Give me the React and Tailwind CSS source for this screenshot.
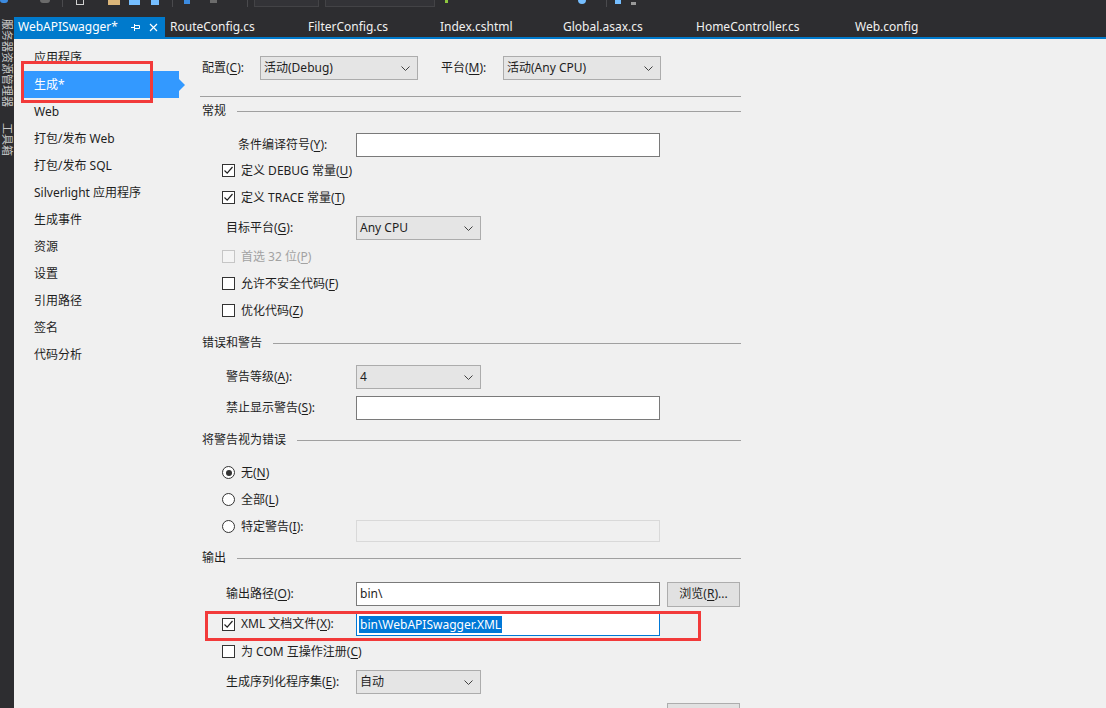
import React from "react";

const Chevron = () => (
  <svg width="9" height="5" viewBox="0 0 9 5" className="shrink-0">
    <path d="M0.5 0.5 L4.5 4.5 L8.5 0.5" stroke="#404040" strokeWidth="1" fill="none" />
  </svg>
);

const Select = ({ w, children }) => (
  <div className={`${w} h-[24px] shrink-0 border border-[#acacac] bg-[#e5e5e5] flex items-center justify-between pl-[3px] pr-[7px] text-[12px] text-[#1e1e1e]`}>
    <span>{children}</span>
    <Chevron />
  </div>
);

const Input = ({ children, disabled }) => (
  <div
    className={
      disabled
        ? "w-[304px] h-[22px] border border-[#d9d9d9] bg-[#f0f0f0]"
        : "w-[304px] h-[24px] border border-[#7a7a7a] bg-white flex items-center pl-[3px] text-[12px] text-[#1e1e1e]"
    }
  >
    {children}
  </div>
);

const Box = ({ checked, disabled }) => (
  <span
    className={
      disabled
        ? "w-[13px] h-[13px] border border-[#c6c6c6] bg-[#f4f4f4] shrink-0 flex items-center justify-center"
        : "w-[13px] h-[13px] border border-[#333333] bg-white shrink-0 flex items-center justify-center"
    }
  >
    {checked && (
      <svg width="11" height="11" viewBox="0 0 11 11">
        <path d="M1.5 5.5 L4.2 8.2 L9.5 2" stroke="#222" strokeWidth="1.2" fill="none" />
      </svg>
    )}
  </span>
);

const Radio = ({ on }) => (
  <span className="w-[13px] h-[13px] rounded-full border border-[#333333] bg-white shrink-0 flex items-center justify-center">
    {on && <span className="w-[6px] h-[6px] rounded-full bg-[#333333]" />}
  </span>
);

const U = ({ children }) => <span className="underline underline-offset-[2px]">{children}</span>;

const CheckRow = ({ checked, disabled, children, mt = "" }) => (
  <div className={`${mt} h-[27px] shrink-0 flex items-center pl-[22px]`}>
    <Box checked={checked} disabled={disabled} />
    <span className={disabled ? "ml-[6px] text-[#a2a2a2]" : "ml-[6px]"}>{children}</span>
  </div>
);

const Header = ({ title, mt }) => (
  <div className={`${mt} h-[20px] shrink-0 flex items-center pl-[2px]`}>
    <span>{title}</span>
    <div className="flex-1 h-px bg-[#a0a0a0] ml-[11px]" />
  </div>
);

const navItems = [
  "应用程序",
  "生成*",
  "Web",
  "打包/发布 Web",
  "打包/发布 SQL",
  "Silverlight 应用程序",
  "生成事件",
  "资源",
  "设置",
  "引用路径",
  "签名",
  "代码分析",
];

const tabs = [
  ["RouteConfig.cs", "w-[138px]"],
  ["FilterConfig.cs", "w-[132px]"],
  ["Index.cshtml", "w-[123px]"],
  ["Global.asax.cs", "w-[133px]"],
  ["HomeController.cs", "w-[159px]"],
  ["Web.config", "w-[120px]"],
];

export default function App() {
  return (
    <div className="relative w-[1106px] h-[708px] overflow-hidden bg-[#2d2d30] flex flex-col font-['Noto_Sans','Noto_Sans_CJK_SC',sans-serif] text-[12px] text-[#1e1e1e]">
      {/* toolbar fragments */}
      <div className="h-[17px] flex items-start shrink-0">
        <div className="w-[8px] h-[3px] bg-[#3c8be0] rounded-b-sm" />
        <div className="ml-[32px] w-[10px] h-[3px] bg-[#6b6b6b] rounded-b-full" />
        <div className="ml-[12px] w-px h-[7px] bg-[#4a4a4d]" />
        <div className="ml-[13px] w-[8px] h-[5px] border border-t-0 border-[#d0d0d0]" />
        <div className="ml-[24px] w-[12px] h-[5px] bg-[#dcb67a]" />
        <div className="ml-[9px] w-[11px] h-[5px] bg-[#75beff]" />
        <div className="ml-[11px] w-[8px] h-[5px] bg-[#75beff]" />
        <div className="ml-[13px] w-px h-[7px] bg-[#4a4a4d]" />
        <div className="ml-[11px] w-[6px] h-[4px] bg-[#3c8be0]" />
        <div className="ml-[20px] w-[7px] h-[3px] bg-[#6b6b6b]" />
        <div className="ml-[30px] w-px h-[7px] bg-[#4a4a4d]" />
        <div className="ml-[6px] w-[65px] h-[7px] border border-t-0 border-[#434346] bg-[#333337]" />
        <div className="ml-[6px] w-[110px] h-[7px] border border-t-0 border-[#434346] bg-[#333337]" />
        <div className="ml-[10px] w-[3px] h-[3px] bg-[#8dc63f]" />
        <div className="ml-[130px] w-[8px] h-[4px] bg-[#75beff] rounded-b-full" />
        <div className="ml-[20px] w-px h-[7px] bg-[#4a4a4d]" />
        <div className="ml-[8px] w-[6px] h-[4px] bg-[#75beff]" />
        <div className="ml-[10px] mt-[2px] w-[5px] h-[3px] bg-[#999999]" />
      </div>

      <div className="flex flex-1 min-h-0">
        {/* left tool strip */}
        <div className="w-[14px] shrink-0 bg-[#2d2d30] flex flex-col items-center pt-[2px] text-[11px] leading-[14px] text-[#c8c8c8]">
          <span className="[writing-mode:vertical-rl] [text-orientation:sideways]">服务器资源管理器</span>
          <span className="[writing-mode:vertical-rl] [text-orientation:sideways] mt-[16px]">工具箱</span>
        </div>

        <div className="flex-1 flex flex-col min-w-0">
          {/* tabs */}
          <div className="h-[20px] flex items-stretch shrink-0 text-[12px]">
            <div className="w-[151px] bg-[#007acc] flex items-center pl-[4px] text-white">
              <span>WebAPISwagger*</span>
              <svg width="9" height="8" viewBox="0 0 9 8" className="ml-auto">
                <path d="M0 4.5 H3.5 M3.5 1 V8 M3.5 2.5 H8.5 V5.5 H3.5" stroke="#ffffff" strokeWidth="1" fill="none" />
              </svg>
              <svg width="9" height="9" viewBox="0 0 9 9" className="ml-[9px] mr-[7px]">
                <path d="M1 1 L8 8 M8 1 L1 8" stroke="#ffffff" strokeWidth="1.2" fill="none" />
              </svg>
            </div>
            {tabs.map(([t, w]) => (
              <div key={t} className={`${w} shrink-0 flex items-center pl-[5px] text-[#f1f1f1]`}>
                {t}
              </div>
            ))}
          </div>
          <div className="h-[2px] bg-[#007acc] shrink-0" />

          {/* body */}
          <div className="flex-1 bg-[#f0f0f0] flex items-start min-h-0">
            {/* nav */}
            <div className="w-[186px] shrink-0 pt-[5px] flex flex-col">
              {navItems.map((n) => {
                const sel = n === "生成*";
                return (
                  <div key={n} className="h-[27px] shrink-0 flex items-center ml-[8px]">
                    <div className={sel ? "w-[157px] h-full bg-[#3399ff] text-white flex items-center pl-[12px]" : "w-[157px] h-full flex items-center pl-[12px]"}>
                      {n}
                    </div>
                    {sel && <div className="w-0 h-0 border-y-[6px] border-y-transparent border-l-[6px] border-l-[#3399ff]" />}
                  </div>
                );
              })}
            </div>

            {/* settings */}
            <div className="w-[541px] shrink-0 flex flex-col pt-[17px]">
              <div className="h-[24px] shrink-0 flex items-center">
                <span className="w-[60px] pl-[2px]">
                  配置(<U>C</U>):
                </span>
                <Select w="w-[158px]">活动(Debug)</Select>
                <span className="ml-[23px] w-[62px]">
                  平台(<U>M</U>):
                </span>
                <Select w="w-[158px]">活动(Any CPU)</Select>
              </div>
              <div className="mt-[16px] h-px shrink-0 bg-[#a0a0a0]" />

              <Header title="常规" mt="mt-[4px]" />
              <div className="mt-[12px] h-[24px] shrink-0 flex items-center">
                <span className="w-[156px] pl-[38px]">
                  条件编译符号(<U>Y</U>):
                </span>
                <Input />
              </div>
              <CheckRow checked>
                定义 DEBUG 常量(<U>U</U>)
              </CheckRow>
              <CheckRow checked>
                定义 TRACE 常量(<U>T</U>)
              </CheckRow>
              <div className="mt-[5px] h-[24px] shrink-0 flex items-center">
                <span className="w-[156px] pl-[26px]">
                  目标平台(<U>G</U>):
                </span>
                <Select w="w-[125px]">Any CPU</Select>
              </div>
              <CheckRow disabled mt="mt-[3px]">
                首选 32 位(<U>P</U>)
              </CheckRow>
              <CheckRow>
                允许不安全代码(<U>F</U>)
              </CheckRow>
              <CheckRow>
                优化代码(<U>Z</U>)
              </CheckRow>

              <Header title="错误和警告" mt="mt-[9px]" />
              <div className="mt-[12px] h-[24px] shrink-0 flex items-center">
                <span className="w-[156px] pl-[26px]">
                  警告等级(<U>A</U>):
                </span>
                <Select w="w-[125px]">4</Select>
              </div>
              <div className="mt-[7px] h-[24px] shrink-0 flex items-center">
                <span className="w-[156px] pl-[26px]">
                  禁止显示警告(<U>S</U>):
                </span>
                <Input />
              </div>

              <Header title="将警告视为错误" mt="mt-[10px]" />
              <div className="mt-[9px] h-[27px] shrink-0 flex items-center pl-[22px]">
                <Radio on />
                <span className="ml-[6px]">
                  无(<U>N</U>)
                </span>
              </div>
              <div className="h-[27px] shrink-0 flex items-center pl-[22px]">
                <Radio />
                <span className="ml-[6px]">
                  全部(<U>L</U>)
                </span>
              </div>
              <div className="flex items-start shrink-0">
                <div className="w-[156px] h-[27px] flex items-center pl-[22px]">
                  <Radio />
                  <span className="ml-[6px]">
                    特定警告(<U>I</U>):
                  </span>
                </div>
                <div className="mt-[7px]">
                  <Input disabled />
                </div>
              </div>

              <Header title="输出" mt="mt-[6px]" />
              <div className="mt-[14px] h-[24px] shrink-0 flex items-center">
                <span className="w-[156px] pl-[26px]">
                  输出路径(<U>O</U>):
                </span>
                <Input>{"bin\\"}</Input>
                <div className="ml-[7px] w-[73px] h-[25px] border border-[#adadad] bg-[#e1e1e1] flex items-center justify-center">
                  浏览(<U>R</U>)...
                </div>
              </div>
              <div className="mt-[6px] h-[24px] shrink-0 flex items-center">
                <div className="w-[156px] flex items-center pl-[22px]">
                  <Box checked />
                  <span className="ml-[6px]">
                    XML 文档文件(<U>X</U>):
                  </span>
                </div>
                <div className="w-[304px] h-[24px] border border-[#0078d7] bg-white flex items-center pl-[2px]">
                  <span className="bg-[#0078d7] text-white px-px leading-[17px]">{"bin\\WebAPISwagger.XML"}</span>
                </div>
              </div>
              <CheckRow mt="mt-[2px]">
                为 COM 互操作注册(<U>C</U>)
              </CheckRow>
              <div className="mt-[5px] h-[24px] shrink-0 flex items-center">
                <span className="w-[156px] pl-[26px]">
                  生成序列化程序集(<U>E</U>):
                </span>
                <Select w="w-[125px]">自动</Select>
              </div>
              <div className="mt-[9px] shrink-0 flex pl-[467px]">
                <div className="w-[73px] h-[24px] border border-[#adadad] bg-[#e1e1e1]" />
              </div>
            </div>
          </div>
        </div>
      </div>

      {/* red annotation boxes */}
      <div className="absolute left-[21px] top-[61px] w-[132px] h-[42px] border-[3px] border-[#f23a3a] pointer-events-none" />
      <div className="absolute left-[205px] top-[611px] w-[496px] h-[30px] border-[3px] border-[#f23a3a] pointer-events-none" />
    </div>
  );
}
